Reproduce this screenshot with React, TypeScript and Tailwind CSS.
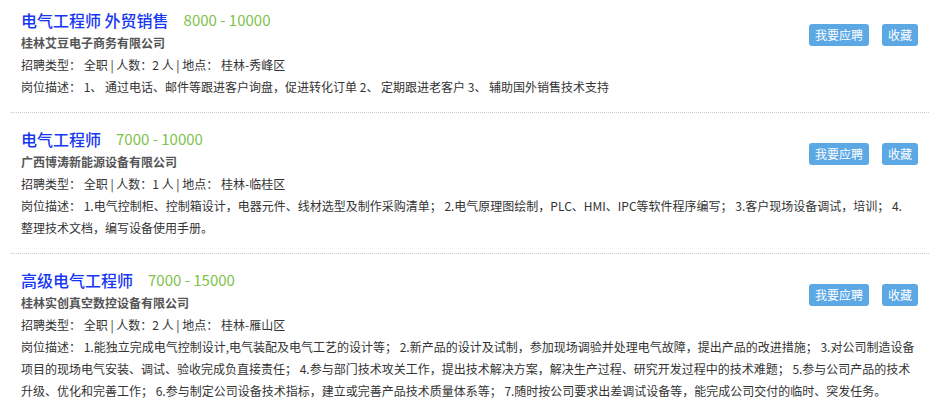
import React from "react";

type Job = {
  title: string;
  salary: string;
  company: string;
  count: string;
  place: string;
  desc: string[];
};

const jobs: Job[] = [
  {
    title: "电气工程师 外贸销售",
    salary: "8000 - 10000",
    company: "桂林艾豆电子商务有限公司",
    count: "2",
    place: "桂林-秀峰区",
    desc: [
      "岗位描述： 1、 通过电话、邮件等跟进客户询盘，促进转化订单 2、 定期跟进老客户 3、 辅助国外销售技术支持",
    ],
  },
  {
    title: "电气工程师",
    salary: "7000 - 10000",
    company: "广西博涛新能源设备有限公司",
    count: "1",
    place: "桂林-临桂区",
    desc: [
      "岗位描述： 1.电气控制柜、控制箱设计，电器元件、线材选型及制作采购清单； 2.电气原理图绘制，PLC、HMI、IPC等软件程序编写； 3.客户现场设备调试，培训； 4.",
      "整理技术文档，编写设备使用手册。",
    ],
  },
  {
    title: "高级电气工程师",
    salary: "7000 - 15000",
    company: "桂林实创真空数控设备有限公司",
    count: "2",
    place: "桂林-雁山区",
    desc: [
      "岗位描述： 1.能独立完成电气控制设计,电气装配及电气工艺的设计等； 2.新产品的设计及试制，参加现场调验并处理电气故障，提出产品的改进措施； 3.对公司制造设备",
      "项目的现场电气安装、调试、验收完成负直接责任； 4.参与部门技术攻关工作，提出技术解决方案，解决生产过程、研究开发过程中的技术难题； 5.参与公司产品的技术",
      "升级、优化和完善工作； 6.参与制定公司设备技术指标，建立或完善产品技术质量体系等； 7.随时按公司要求出差调试设备等，能完成公司交付的临时、突发任务。",
    ],
  },
];

export default function App() {
  return (
    <div
      className="w-[942px] h-[411px] overflow-hidden bg-white"
      style={{ fontFamily: '"Noto Sans CJK SC", "Microsoft YaHei", sans-serif' }}
    >
      <div className="ml-[11px] w-[918px]">
        {jobs.map((job, i) => (
          <div
            key={i}
            className={
              (i === 0 ? "pt-[8px] " : "pt-[14px] ") +
              "pb-[14px] pl-[10px] pr-[11px] border-b border-dotted border-[#cccccc]"
            }
          >
            <div className="float-right mt-[16px] flex gap-[13px]">
              <button className="h-[22px] px-[6px] rounded-[3px] bg-[#5ca8e5] text-white text-[12px] leading-[22px]">
                我要应聘
              </button>
              <button className="h-[22px] px-[6px] rounded-[3px] bg-[#5ca8e5] text-white text-[12px] leading-[22px]">
                收藏
              </button>
            </div>
            <div className="h-[24px] flex items-center">
              <span className="text-[16px] leading-[24px] font-medium text-[#1638f2]">{job.title}</span>
              <span className="ml-[15px] text-[15px] leading-[24px] text-[#7ec14b]">{job.salary}</span>
            </div>
            <div className="text-[12px] leading-[22px] font-bold text-[#555]">{job.company}</div>
            <div className="text-[12px] leading-[22px] text-[#333]">
              招聘类型： 全职 | 人数：{job.count} 人 | 地点： {job.place}
            </div>
            {job.desc.map((line, j) => (
              <div key={j} className="text-[12px] leading-[22px] text-[#333] whitespace-nowrap">
                {line}
              </div>
            ))}
          </div>
        ))}
      </div>
    </div>
  );
}
